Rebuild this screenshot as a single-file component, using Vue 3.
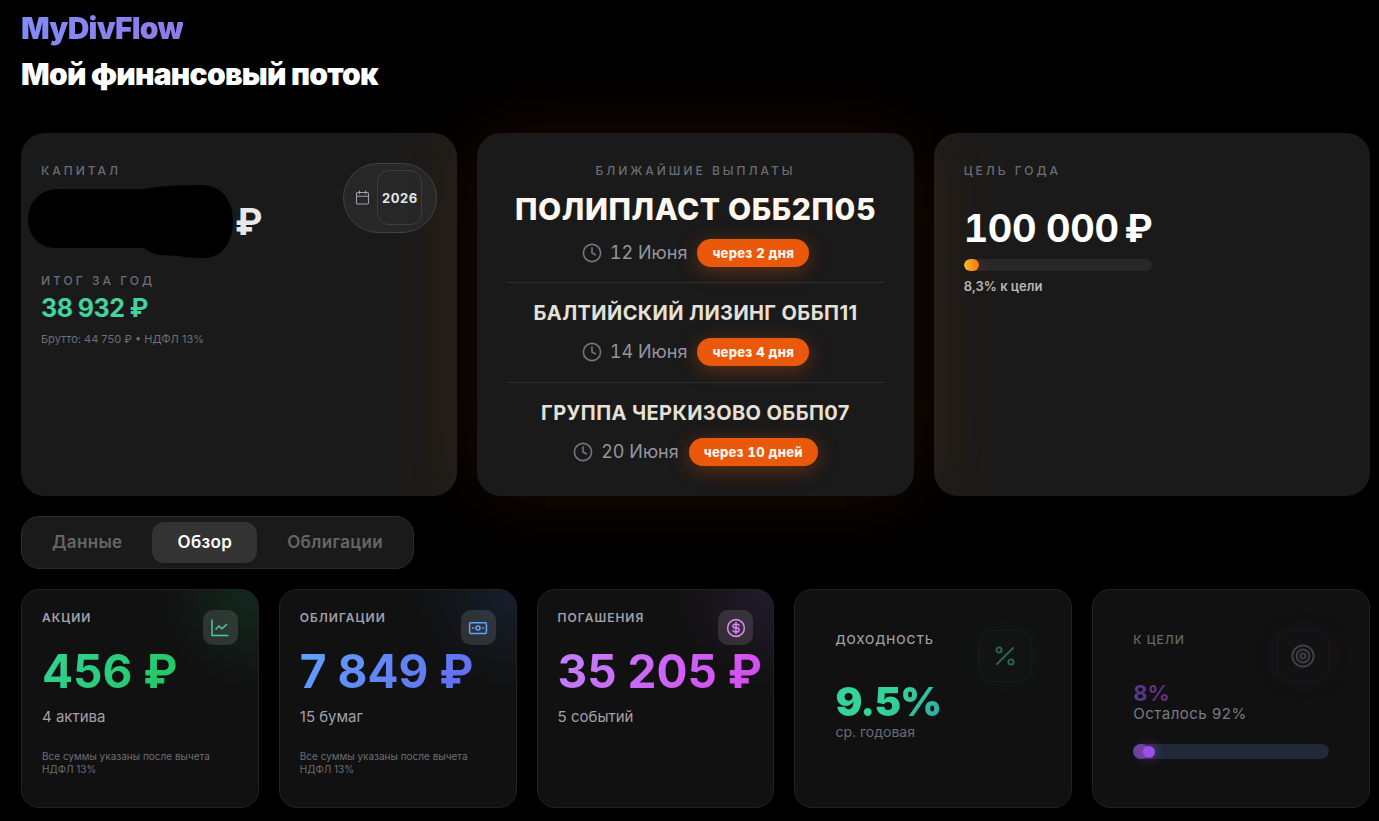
<script setup>
import { ref } from 'vue'

const year = ref('2026')
const activeTab = ref('Обзор')
const tabs = ['Данные', 'Обзор', 'Облигации']

const payouts = [
  { name: 'ПОЛИПЛАСТ ОББ2П05', date: '12 Июня', due: 'через 2 дня' },
  { name: 'БАЛТИЙСКИЙ ЛИЗИНГ ОББП11', date: '14 Июня', due: 'через 4 дня' },
  { name: 'ГРУППА ЧЕРКИЗОВО ОББП07', date: '20 Июня', due: 'через 10 дней' },
]

const note = 'Все суммы указаны после вычета НДФЛ 13%'
const metrics = [
  { kind: 'stocks', title: 'АКЦИИ', amount: '456 ₽', count: '4 актива', note },
  { kind: 'bonds', title: 'ОБЛИГАЦИИ', amount: '7 849 ₽', count: '15 бумаг', note },
  { kind: 'redemptions', title: 'ПОГАШЕНИЯ', amount: '35 205 ₽', count: '5 событий', note: '' },
]

const yearGoal = 8.3
const goalProgress = 8
</script>

<template>
  <div class="page">
    <header class="header">
      <div class="brand">MyDivFlow</div>
      <h1 class="title">Мой финансовый поток</h1>
    </header>

    <section class="summary">
      <article class="panel capital">
        <div class="capital-main">
          <h2 class="label">КАПИТАЛ</h2>
          <div class="capital-amount">
            <svg class="mask" viewBox="0 0 205 74" aria-hidden="true">
              <path d="M30 4H117Q122 3 128 2Q145 0 174 0C192 0 205 14 205 36C205 60 192 73 176 73Q162 73 151 71L132 70Q123 69 116 63H27C12 63 0 51 0 34C0 17 13 4 30 4Z" fill="#000" />
            </svg>
            <span>₽</span>
          </div>
          <h3 class="label">ИТОГ ЗА ГОД</h3>
          <div class="year-total">38 932 ₽</div>
          <div class="gross">Брутто: 44 750 ₽ • НДФЛ 13%</div>
        </div>
        <label class="year-picker">
          <svg width="15" height="15" viewBox="0 0 15 15" fill="none" stroke="#a1a1aa" stroke-width="1.1" stroke-linecap="round" stroke-linejoin="round" aria-hidden="true">
            <rect x="1.5" y="2.5" width="12" height="11.5" rx="1.2" />
            <path d="M1.5 6.2h12M4.5 1v2.8M10.5 1v2.8" />
          </svg>
          <select v-model="year" class="year-select" aria-label="Год">
            <option>2026</option>
          </select>
        </label>
      </article>

      <article class="panel upcoming">
        <h2 class="label">БЛИЖАЙШИЕ ВЫПЛАТЫ</h2>
        <ul class="payouts">
          <li v-for="p in payouts" :key="p.name" class="payout">
            <div class="payout-name">{{ p.name }}</div>
            <div class="payout-meta">
              <svg width="20" height="20" viewBox="0 0 20 20" fill="none" stroke="#71757d" stroke-width="1.6" stroke-linecap="round" stroke-linejoin="round" aria-hidden="true">
                <circle cx="10" cy="10" r="8.6" />
                <path d="M10 4.9V10l3.2 1.8" />
              </svg>
              <span class="payout-date">{{ p.date }}</span>
              <span class="due">{{ p.due }}</span>
            </div>
          </li>
        </ul>
      </article>

      <article class="panel goal">
        <h2 class="label">ЦЕЛЬ ГОДА</h2>
        <div class="goal-body">
          <div class="goal-amount"><span>100 000</span><span>₽</span></div>
          <div class="goal-track"><div class="goal-fill" :style="{ width: yearGoal + '%' }"></div></div>
          <div class="goal-text">8,3% к цели</div>
        </div>
      </article>
    </section>

    <nav class="tabs">
      <button v-for="t in tabs" :key="t" type="button" class="tab" :class="{ active: t === activeTab }" @click="activeTab = t">{{ t }}</button>
    </nav>

    <section class="metrics">
      <article v-for="m in metrics" :key="m.kind" class="metric" :class="m.kind">
        <div class="metric-head">
          <h2 class="metric-title">{{ m.title }}</h2>
          <div class="metric-icon">
            <svg v-if="m.kind === 'stocks'" width="18" height="18" viewBox="0 0 18 18" fill="none" stroke="#4ccb98" stroke-width="1.5" aria-hidden="true">
              <path d="M1 .5V16.5H17.5M4.5 10.5L8 7L11 9.8L16 5" />
            </svg>
            <svg v-else-if="m.kind === 'bonds'" width="20" height="20" viewBox="0 0 20 20" fill="none" stroke="#60a5fa" stroke-width="1.5" stroke-linejoin="round" aria-hidden="true">
              <rect x="1.6" y="4.8" width="16.8" height="10.6" rx="1" />
              <circle cx="10" cy="10.1" r="2" />
              <path d="M4.6 10.1h.9M14.5 10.1h.9" stroke-linecap="round" />
            </svg>
            <svg v-else width="20" height="20" viewBox="0 0 20 20" fill="none" stroke="#d982f5" stroke-width="1.6" stroke-linecap="round" stroke-linejoin="round" aria-hidden="true">
              <circle cx="10" cy="10" r="8.4" />
              <path d="M13 7.3C12.6 6.5 11.8 6.1 10.8 6.1H9.2C7.9 6.1 7 6.9 7 8C7 9.1 7.8 9.9 9.2 9.9H10.8C12.2 9.9 13 10.7 13 11.9C13 13.1 12.1 13.9 10.8 13.9H9.2C8.2 13.9 7.4 13.5 7 12.7M10 4.6V6.1M10 6.1V15.4" />
            </svg>
          </div>
        </div>
        <div class="metric-amount">{{ m.amount }}</div>
        <div class="metric-count">{{ m.count }}</div>
        <p v-if="m.note" class="metric-note">{{ m.note }}</p>
      </article>

      <article class="metric wide yield">
        <div class="metric-head">
          <h2 class="metric-title">ДОХОДНОСТЬ</h2>
          <div class="metric-icon">
            <svg width="20" height="20" viewBox="0 0 20 20" fill="none" stroke="#28664f" stroke-width="1.9" stroke-linecap="round" aria-hidden="true">
              <path d="M18 2L2 18" />
              <circle cx="4" cy="4" r="2.6" />
              <circle cx="16" cy="16" r="2.6" />
            </svg>
          </div>
        </div>
        <div class="yield-value">9.5%</div>
        <div class="yield-note">ср. годовая</div>
      </article>

      <article class="metric wide target">
        <div class="metric-head">
          <h2 class="metric-title">К ЦЕЛИ</h2>
          <div class="metric-icon">
            <svg width="24" height="24" viewBox="0 0 24 24" fill="none" stroke="#403d46" stroke-width="2" aria-hidden="true">
              <circle cx="12" cy="12" r="10.6" />
              <circle cx="12" cy="12" r="6.4" />
              <circle cx="12" cy="12" r="2.4" />
            </svg>
          </div>
        </div>
        <div class="target-value">8%</div>
        <div class="target-note">Осталось 92%</div>
        <div class="target-track"><div class="target-fill" :style="{ width: goalProgress + '%' }"></div></div>
      </article>
    </section>
  </div>
</template>

<style>
body {
  background: #000;
}
</style>

<style scoped>
.page {
  box-sizing: border-box;
  padding: 10px 9px 13px 21px;
  color: #fff;
  font-family: Inter, "Noto Sans", sans-serif;
}
.page * {
  box-sizing: border-box;
}
h1, h2, h3, p, ul {
  margin: 0;
  padding: 0;
}
button, select {
  font-family: inherit;
}
.header {
  display: flex;
  flex-direction: column;
  align-items: flex-start;
  gap: 10px;
  margin-bottom: 41px;
}
.brand,
.title {
  font-size: 30px;
  line-height: 36px;
  font-weight: 900;
  letter-spacing: -0.025em;
}
.brand {
  background: linear-gradient(90deg, #818cf8, #8f7ae6);
  background-clip: text;
  color: transparent;
}
.summary {
  display: grid;
  grid-template-columns: repeat(3, minmax(0, 1fr));
  gap: 20px;
  margin-bottom: 20px;
}
.panel {
  background: #1a1a1a;
  border-radius: 24px;
  padding: 30px;
}
.label {
  font-size: 12px;
  line-height: 15px;
  font-weight: 500;
  letter-spacing: 3px;
  color: #6b6e76;
}
.capital {
  display: flex;
  justify-content: space-between;
  align-items: flex-start;
  padding: 30px 20px;
  background: linear-gradient(90deg, #1a1a1a 84%, #1f1c18);
}
.capital-amount {
  display: flex;
  align-items: center;
  gap: 2px;
  margin: 7px 0 14px -13px;
  font-size: 37px;
  line-height: 74px;
  font-weight: 700;
  color: #e8e8e8;
}
.mask {
  width: 205px;
  height: 74px;
}
.year-total {
  margin-top: 3px;
  font-size: 25px;
  line-height: 34px;
  font-weight: 700;
  letter-spacing: -0.02em;
  color: #43d39e;
}
.gross {
  margin-top: 6px;
  font-size: 11px;
  line-height: 16px;
  color: #6b6e76;
}
.year-picker {
  display: flex;
  align-items: center;
  gap: 7px;
  padding: 6px 14px 7px 11px;
  border: 1px solid #414141;
  border-radius: 35px;
  background: #272727;
}
.year-select {
  appearance: none;
  width: 45px;
  height: 55px;
  padding: 0 3px;
  border: 1px solid #3a3d42;
  border-radius: 12px;
  background: transparent;
  color: #e4e4e7;
  font-size: 13px;
  font-weight: 700;
  letter-spacing: 0.5px;
  text-align: center;
}
.upcoming {
  position: relative;
  box-shadow: 0 0 80px rgba(234, 88, 12, 0.12);
  text-align: center;
}
.payouts {
  list-style: none;
}
.payout {
  padding: 15px 0 16px;
  border-bottom: 1px solid #2f2f2f;
}
.payout:first-child {
  padding: 11px 0 15px;
}
.payout:last-child {
  padding-bottom: 0;
  border-bottom: 0;
}
.payout-name {
  font-size: 20px;
  line-height: 30px;
  font-weight: 700;
  letter-spacing: 0.02em;
  color: #e5e0d8;
}
.payout:first-child .payout-name {
  font-size: 30px;
  line-height: 40px;
  font-weight: 800;
  color: #fff7ed;
}
.payout-meta {
  display: flex;
  justify-content: center;
  align-items: center;
  gap: 8px;
  margin-top: 10px;
}
.payout-date {
  font-size: 18px;
  line-height: 28px;
  font-variant-numeric: tabular-nums;
  color: #9296a0;
}
.due {
  margin-left: 2px;
  padding: 0 15px;
  border-radius: 14px;
  background: #ea580c;
  box-shadow: 0 4px 20px rgba(234, 88, 12, 0.35);
  font-size: 13px;
  line-height: 28px;
  font-weight: 800;
  letter-spacing: 0.02em;
  font-variant-numeric: tabular-nums;
  color: #fff7ed;
}
.goal {
  background: linear-gradient(90deg, #1f1c18, #1a1a1a 16%);
}
.goal-body {
  display: inline-block;
  margin-top: 26px;
}
.goal-amount {
  display: flex;
  gap: 6px;
  font-size: 38px;
  line-height: 48px;
  font-weight: 700;
  letter-spacing: -0.01em;
  font-variant-numeric: tabular-nums;
}
.goal-track {
  height: 12px;
  margin-top: 7px;
  border-radius: 6px;
  background: #282828;
  overflow: hidden;
}
.goal-fill {
  height: 100%;
  border-radius: 6px;
  background: linear-gradient(90deg, #fbbf24, #f97316);
  box-shadow: 0 0 15px rgba(249, 115, 22, 0.3);
}
.goal-text {
  margin-top: 7px;
  font-size: 13px;
  line-height: 16px;
  font-weight: 600;
  color: #b8b8b8;
}
.tabs {
  display: flex;
  gap: 5px;
  width: fit-content;
  margin-bottom: 20px;
  padding: 5px;
  border: 1px solid #2c2c2c;
  border-radius: 18px;
  background: #1a1a1a;
}
.tab {
  padding: 0 25px;
  border: 0;
  border-radius: 12px;
  background: transparent;
  color: #666;
  font-size: 17px;
  line-height: 41px;
  font-weight: 600;
  letter-spacing: 0.02em;
}
.tab.active {
  background: #333;
  color: #fff;
}
.metrics {
  display: flex;
  gap: 20px;
  min-height: 219px;
}
.metric {
  flex: 1 1 0;
  min-width: 0;
  padding: 20px;
  border: 1px solid #222;
  border-radius: 18px;
  background: #111;
}
.stocks {
  background: radial-gradient(circle at 100% 0, #12291f, #111 100px);
}
.bonds {
  background: radial-gradient(circle at 100% 0, #151f2d, #111 100px);
}
.redemptions {
  background: radial-gradient(circle at 100% 0, #231a2b, #111 100px);
}
.metric-head {
  display: flex;
  justify-content: space-between;
  align-items: flex-start;
}
.metric-title {
  font-size: 12px;
  line-height: 16px;
  font-weight: 600;
  letter-spacing: 1px;
  color: #a1a1aa;
}
.metric-icon {
  display: flex;
  flex: none;
  justify-content: center;
  align-items: center;
  width: 35px;
  height: 35px;
  border-radius: 10px;
  background: rgba(255, 255, 255, 0.12);
}
.metric-amount {
  width: fit-content;
  font-size: 46px;
  line-height: 52px;
  font-weight: 700;
  white-space: nowrap;
  background-clip: text;
  color: transparent;
}
.stocks .metric-amount {
  background-image: linear-gradient(135deg, #34d399, #22c55e);
}
.bonds .metric-amount {
  background-image: linear-gradient(135deg, #60a5fa, #6366f1);
}
.redemptions .metric-amount {
  background-image: linear-gradient(135deg, #c084fc, #d946ef);
}
.metric-count {
  margin-top: 10px;
  font-size: 15px;
  line-height: 20px;
  color: #a1a1aa;
}
.metric-note {
  margin-top: 23px;
  font-size: 10px;
  line-height: 13px;
  color: #6b6e76;
}
.metric.wide {
  padding: 40px;
}
.wide .metric-title {
  line-height: 20px;
  font-weight: 500;
}
.wide .metric-icon {
  width: 52px;
  height: 52px;
  border: 1px solid #18201d;
  border-radius: 12px;
  background: #121413;
  box-shadow: 0 0 25px rgba(52, 211, 153, 0.06);
}
.yield-value {
  width: fit-content;
  font-size: 40px;
  line-height: 40px;
  font-weight: 900;
  letter-spacing: -0.02em;
  background: linear-gradient(135deg, #34d399 50%, #2fa7a7);
  background-clip: text;
  color: transparent;
}
.yield-note {
  font-size: 14px;
  line-height: 20px;
  color: #6b6b78;
}
.target .metric-title {
  color: #66666c;
}
.target .metric-icon {
  border-color: #1a181d;
  background: #121213;
  box-shadow: 0 0 25px rgba(168, 85, 247, 0.05);
}
.target-value {
  width: fit-content;
  font-size: 22px;
  line-height: 22px;
  font-weight: 700;
  background: linear-gradient(90deg, #563a8c, #6f2a86);
  background-clip: text;
  color: transparent;
}
.target-note {
  font-size: 15px;
  line-height: 20px;
  letter-spacing: 0.5px;
  color: #787c84;
}
.target-track {
  height: 15px;
  margin-top: 20px;
  border-radius: 8px;
  background: #1f2937;
}
.target-fill {
  position: relative;
  height: 100%;
  min-width: 15px;
  border-radius: 8px;
  background: #6d409c;
}
.target-fill::after {
  content: "";
  position: absolute;
  top: 2px;
  right: -6px;
  width: 12px;
  height: 12px;
  border-radius: 50%;
  background: #9d4fea;
  box-shadow: 0 0 12px rgba(168, 85, 247, 0.6);
}
</style>
